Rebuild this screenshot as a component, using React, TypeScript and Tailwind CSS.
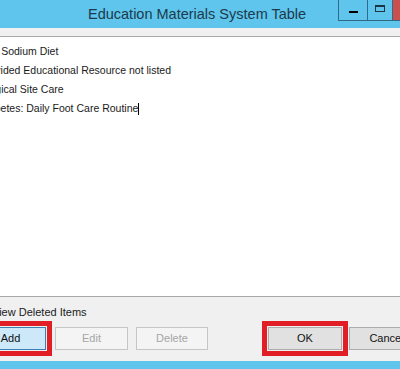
import React from 'react';

const rows = [
  'Low Sodium Diet',
  'Provided Educational Resource not listed',
  'Surgical Site Care',
  'Diabetes: Daily Foot Care Routine',
];

const App: React.FC = () => {
  return (
    <div className="w-[400px] h-[369px] overflow-hidden bg-[#5fc5ec] font-['Liberation_Sans',Arial,sans-serif]">
      <div className="ml-[-30px] w-[470px] h-full flex flex-col">
        {/* title bar */}
        <div className="h-[28px] flex items-start shrink-0">
          <div className="flex-1 pl-[118px] pt-[6px] text-[14.5px] leading-[17px] text-[#1b3a4b]">
            Education Materials System Table
          </div>
          <div className="flex h-[21px] border-b border-[#2f6b86]">
            <div className="w-[29px] border-l border-[#2f6b86] flex items-center justify-center">
              <div className="w-[9px] h-[2px] bg-black mt-[3px]" />
            </div>
            <div className="w-[25px] border-l border-[#2f6b86] flex items-center justify-center">
              <div className="w-[10px] h-[7px] border border-t-2 border-[#1e3440] -mt-[3px]" />
            </div>
            <div className="w-[48px] bg-[#c9504c] border-l border-[#2f6b86]" />
          </div>
        </div>

        {/* client area */}
        <div className="flex-1 bg-[#f0f0f0] flex flex-col pt-[8px]">
          <div className="ml-[4px] h-[261px] bg-white border border-[#a9a9a9] pt-[5px] text-[10.5px] text-[#1a1a1a]">
            {rows.map((r, i) => (
              <div key={r} className="h-[19px] leading-[19px] pl-[4px] whitespace-nowrap flex items-center">
                {r}
                {i === rows.length - 1 && <span className="inline-block w-px h-[12px] bg-black" />}
              </div>
            ))}
          </div>

          <div className="mt-[9px] h-[13px] flex items-center gap-[4px] pl-[5px] text-[11px] text-[#1a1a1a]">
            <div className="w-[13px] h-[13px] bg-white border border-[#707070]" />
            <span>View Deleted Items</span>
          </div>

          <div className="mt-[8px] flex pl-[3px] text-[11px]">
            <button className="w-[73px] h-[23px] pl-[2px] bg-[#cde8f9] border border-[#3c7fb1] text-[#111] outline-5 outline-solid outline-[#e11d26] outline-offset-1">
              Add
            </button>
            <button className="ml-[9px] w-[73px] h-[23px] bg-[#f4f4f4] border border-[#c6c6c6] text-[#a6a6a6]">
              Edit
            </button>
            <button className="ml-[8px] w-[72px] h-[23px] bg-[#f4f4f4] border border-[#c6c6c6] text-[#a6a6a6]">
              Delete
            </button>
            <button className="ml-[60px] w-[74px] h-[23px] bg-[#e1e1e1] border border-[#adadad] text-[#111] outline-5 outline-solid outline-[#e11d26] outline-offset-1">
              OK
            </button>
            <button className="ml-[7px] w-[75px] h-[23px] bg-[#e1e1e1] border border-[#adadad] text-[#111]">
              Cancel
            </button>
          </div>
          <div className="h-[11px]" />
        </div>
        <div className="h-[8px] shrink-0" />
      </div>
    </div>
  );
};

export default App;
